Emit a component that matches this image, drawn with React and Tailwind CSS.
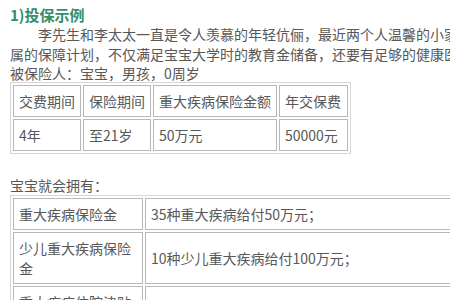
export default function App() {
  const font = { fontFamily: '"Microsoft YaHei", "Noto Sans CJK SC", "Noto Sans", sans-serif' };
  const cell = "border border-[#b8b8b8] px-[5px] py-[5px] text-left font-normal align-middle";
  return (
    <div className="w-[450px] h-[300px] overflow-hidden bg-white text-[#585858]" style={font}>
      <div className="pl-[10px] pt-[5px] w-[800px]">
        <div className="text-[15px] leading-[20px] font-bold text-[#2f8f6e]">1)投保示例</div>
        <div className="text-[14px] leading-[19.5px] whitespace-nowrap">
          <div className="pl-[28px]">李先生和李太太一直是令人羡慕的年轻伉俪，最近两个人温馨的小家庭迎来了新成员，他们希望为宝宝准</div>
          <div>属的保障计划，不仅满足宝宝大学时的教育金储备，还要有足够的健康医疗保障。</div>
          <div>被保险人：宝宝，男孩，0周岁</div>
        </div>
        <table className="-mt-[2px] border border-[#d6d6d6] border-separate border-spacing-[2px] text-[14px] leading-[20px] table-fixed whitespace-nowrap">
          <tbody>
            <tr>
              <td className={cell + " w-[68px]"}>交费期间</td>
              <td className={cell + " w-[68px]"}>保险期间</td>
              <td className={cell + " w-[123px]"}>重大疾病保险金额</td>
              <td className={cell + " w-[69px]"}>年交保费</td>
            </tr>
            <tr>
              <td className={cell}>4年</td>
              <td className={cell}>至21岁</td>
              <td className={cell}>50万元</td>
              <td className={cell}>50000元</td>
            </tr>
          </tbody>
        </table>
        <div className="mt-[22px] text-[14px] leading-[19.5px]">宝宝就会拥有：</div>
        <table className="w-[700px] border border-[#d6d6d6] border-separate border-spacing-[2px] text-[14px] leading-[20px] table-fixed">
          <tbody>
            <tr>
              <td className={cell + " w-[130px]"}>重大疾病保险金</td>
              <td className={cell}>35种重大疾病给付50万元；</td>
            </tr>
            <tr>
              <td className={cell}>少儿重大疾病保险金</td>
              <td className={cell}>10种少儿重大疾病给付100万元；</td>
            </tr>
            <tr>
              <td className={cell}>重大疾病住院津贴保险金</td>
              <td className={cell}>每日给付住院津贴</td>
            </tr>
          </tbody>
        </table>
      </div>
    </div>
  );
}
